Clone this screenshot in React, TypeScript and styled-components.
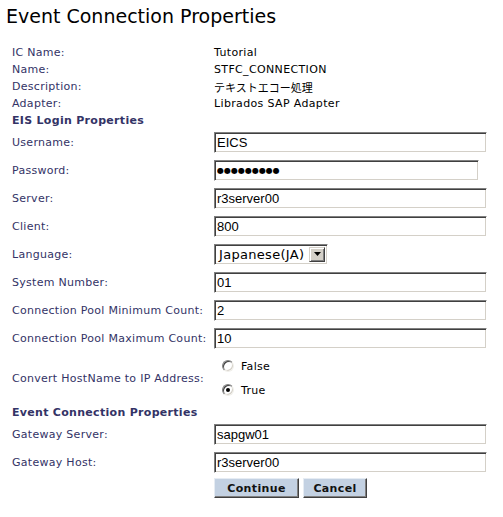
import React from "react";
import styled, { createGlobalStyle } from "styled-components";

const Global = createGlobalStyle`
  html, body { margin: 0; padding: 0; background: #fff; }
  body { font-family: "DejaVu Sans", Verdana, sans-serif; }
`;

const Page = styled.div`
  width: 503px;
  height: 517px;
  background: #fff;
  overflow: hidden;
`;

const Title = styled.h1`
  margin: 0;
  padding: 4px 0 0 6px;
  height: 44px;
  box-sizing: border-box;
  font-family: "DejaVu Sans", Verdana, sans-serif;
  font-weight: normal;
  font-size: 19px;
  line-height: 24px;
  color: #000;
`;

const Form = styled.div`
  display: grid;
  grid-template-columns: 202px 273px;
  padding-left: 12px;
`;

const Label = styled.div<{ $h?: number }>`
  height: ${(p) => p.$h ?? 28}px;
  display: flex;
  align-items: center;
  font-size: 11px;
  letter-spacing: 0.28px;
  color: #333366;
  white-space: nowrap;
`;

const Value = styled.div<{ $h?: number }>`
  height: ${(p) => p.$h ?? 28}px;
  display: flex;
  align-items: center;
  font-size: 11px;
  letter-spacing: 0.35px;
  color: #000;
  white-space: nowrap;
`;

const Jp = styled.span`
  font-family: "Noto Sans CJK JP", sans-serif;
  font-size: 11px;
  letter-spacing: 0;
`;

const Section = styled.div`
  grid-column: 1 / span 2;
  height: 16px;
  display: flex;
  align-items: center;
  font-size: 11px;
  font-weight: bold;
  letter-spacing: 0.3px;
  color: #333366;
`;

const Field = styled.input<{ $w?: number }>`
  box-sizing: border-box;
  width: ${(p) => p.$w ?? 273}px;
  height: 21px;
  margin: 0;
  padding: 1px 2px 0 2px;
  border: 1px solid;
  border-color: #808080 #ffffff #ffffff #808080;
  box-shadow: inset 1px 1px 0 #404040, inset -1px -1px 0 #d4d0c8;
  background: #fff;
  font-family: "Liberation Sans", Arial, sans-serif;
  font-size: 13px;
  color: #000;
  outline: none;
`;

const Dots = styled(Field)`
  font-family: "DejaVu Sans", Verdana, sans-serif;
  font-size: 8px;
  padding-top: 0;
`;

const SelectBox = styled.div`
  box-sizing: border-box;
  width: 114px;
  height: 21px;
  display: flex;
  align-items: stretch;
  border: 1px solid;
  border-color: #808080 #ffffff #ffffff #808080;
  box-shadow: inset 1px 1px 0 #404040, inset -1px -1px 0 #d4d0c8;
  padding: 2px;
  background: #fff;
`;

const SelectText = styled.div`
  flex: 1;
  display: flex;
  align-items: center;
  padding-left: 2px;
  font-size: 13px;
  letter-spacing: 0.3px;
  color: #000;
`;

const ArrowBtn = styled.div`
  width: 16px;
  box-sizing: border-box;
  background: #d4d0c8;
  border: 1px solid;
  border-color: #d4d0c8 #404040 #404040 #d4d0c8;
  box-shadow: inset 1px 1px 0 #ffffff, inset -1px -1px 0 #808080;
  display: flex;
  align-items: center;
  justify-content: center;
`;

const RadioGroup = styled.div`
  height: 52px;
  display: flex;
  flex-direction: column;
  justify-content: center;
`;

const RadioRow = styled.label`
  height: 24px;
  display: flex;
  align-items: center;
  padding-left: 8px;
  font-size: 11px;
  letter-spacing: 0.3px;
  color: #000;
`;

const RadioCircle = styled.span<{ $on?: boolean }>`
  position: relative;
  width: 12px;
  height: 12px;
  box-sizing: border-box;
  border-radius: 50%;
  border: 1px solid;
  border-color: #808080 #f0efea #f0efea #808080;
  background: #fff;
  margin-right: 7px;
  box-shadow: inset 1px 1px 0 #404040, inset -1px -1px 0 #d4d0c8;
  &::after {
    content: "";
    display: ${(p) => (p.$on ? "block" : "none")};
    position: absolute;
    left: 3px;
    top: 3px;
    width: 4px;
    height: 4px;
    border-radius: 50%;
    background: #000;
  }
`;

const Buttons = styled.div`
  grid-column: 2;
  display: flex;
  gap: 4px;
  padding-top: 2px;
`;

const Btn = styled.button<{ $w: number }>`
  box-sizing: border-box;
  width: ${(p) => p.$w}px;
  height: 20px;
  margin: 0;
  padding: 0;
  background: #c3d1e2;
  border: 1px solid;
  border-color: #e6ecf3 #404040 #404040 #e6ecf3;
  box-shadow: inset -1px -1px 0 #808080;
  font-family: "DejaVu Sans", Verdana, sans-serif;
  font-size: 11px;
  font-weight: bold;
  letter-spacing: 0.35px;
  color: #111;
  cursor: pointer;
`;

const info: [string, React.ReactNode][] = [
  ["IC Name:", "Tutorial"],
  ["Name:", "STFC_CONNECTION"],
  ["Description:", <Jp key="jp">テキストエコー処理</Jp>],
  ["Adapter:", "Librados SAP Adapter"],
];

export default function App() {
  return (
    <Page>
      <Global />
      <Title>Event Connection Properties</Title>
      <Form>
        {info.map(([l, v]) => (
          <React.Fragment key={l}>
            <Label $h={17}>{l}</Label>
            <Value $h={17}>{v}</Value>
          </React.Fragment>
        ))}
        <Section>EIS Login Properties</Section>

        <Label>Username:</Label>
        <Value><Field defaultValue="EICS" /></Value>

        <Label>Password:</Label>
        <Value><Dots $w={265} defaultValue="●●●●●●●●●" /></Value>

        <Label>Server:</Label>
        <Value><Field defaultValue="r3server00" /></Value>

        <Label>Client:</Label>
        <Value><Field defaultValue="800" /></Value>

        <Label>Language:</Label>
        <Value>
          <SelectBox>
            <SelectText>Japanese(JA)</SelectText>
            <ArrowBtn>
              <svg width="7" height="4" viewBox="0 0 7 4">
                <path d="M0 0h7L3.5 4z" fill="#000" />
              </svg>
            </ArrowBtn>
          </SelectBox>
        </Value>

        <Label>System Number:</Label>
        <Value><Field defaultValue="01" /></Value>

        <Label>Connection Pool Minimum Count:</Label>
        <Value><Field defaultValue="2" /></Value>

        <Label>Connection Pool Maximum Count:</Label>
        <Value><Field defaultValue="10" /></Value>

        <Label $h={52}>Convert HostName to IP Address:</Label>
        <RadioGroup>
          <RadioRow><RadioCircle />False</RadioRow>
          <RadioRow><RadioCircle $on />True</RadioRow>
        </RadioGroup>

        <Section>Event Connection Properties</Section>

        <Label>Gateway Server:</Label>
        <Value><Field defaultValue="sapgw01" /></Value>

        <Label>Gateway Host:</Label>
        <Value><Field defaultValue="r3server00" /></Value>

        <Buttons>
          <Btn $w={85}>Continue</Btn>
          <Btn $w={64}>Cancel</Btn>
        </Buttons>
      </Form>
    </Page>
  );
}
